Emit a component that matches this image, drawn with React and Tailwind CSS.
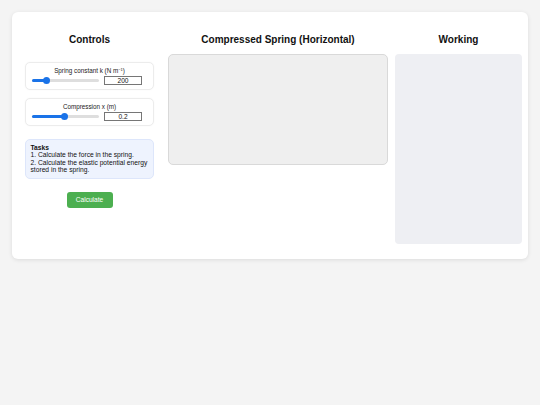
import React from "react";

function Slider({ pct }) {
  return (
    <div className="relative h-[9px] w-[67px] flex items-center">
      <div className="h-[3px] w-full rounded-full bg-[#dedede]" />
      <div
        className="absolute left-0 h-[3px] rounded-full bg-[#1a73e8]"
        style={{ width: `${pct}%` }}
      />
      <div
        className="absolute h-[7px] w-[7px] -ml-[3.5px] rounded-full bg-[#1a73e8]"
        style={{ left: `${pct}%` }}
      />
    </div>
  );
}

function Control({ label, value, pct }) {
  return (
    <div className="rounded-[5px] border border-[#ececec] bg-white pt-[4px] pb-[3.5px] pl-[6px] shadow-[0_0_2px_rgba(0,0,0,0.04)]">
      <div className="text-center text-[6.3px] leading-[7.5px] text-[#222] pr-[6px]">{label}</div>
      <div className="mt-[2px] flex items-center gap-[5px]">
        <Slider pct={pct} />
        <div className="h-[9px] w-[38px] border border-[#767676] text-center text-[6.6px] leading-[7px] text-[#111]">
          {value}
        </div>
      </div>
    </div>
  );
}

export default function App() {
  return (
    <div
      className="min-h-screen bg-[#f4f4f4] p-3"
      style={{ fontFamily: '"Liberation Sans", Arial, sans-serif' }}
    >
      <div className="flex h-[247px] rounded-[6px] bg-white pl-[13px] pr-[6px] pt-[21.5px] shadow-[0_1px_4px_rgba(0,0,0,0.1)]">
        {/* Controls */}
        <div className="w-[129px] shrink-0">
          <h2 className="text-center text-[10px] font-bold leading-[12px] text-[#111]">Controls</h2>
          <div className="mt-[16px] flex flex-col gap-[8px]">
            <Control
              label={<>Spring constant k (N m<sup className="text-[4px]">−1</sup>)</>}
              value="200"
              pct={22}
            />
            <Control label="Compression x (m)" value="0.2" pct={49} />
          </div>
          <div className="mt-[13.5px] rounded-[5px] border border-[#dde6fb] bg-[#eef3fe] px-[4.5px] pt-[3.5px] pb-[4.5px] text-[6.7px] leading-[7.6px] text-[#111]">
            <div className="font-bold">Tasks</div>
            <div>1. Calculate the force in the spring.</div>
            <div>2. Calculate the elastic potential energy stored in the spring.</div>
          </div>
          <div className="mt-[13px] flex justify-center">
            <button className="h-[16px] w-[46px] rounded-[3px] bg-[#4caf50] text-[6.6px] text-white">
              Calculate
            </button>
          </div>
        </div>

        {/* Spring */}
        <div className="ml-[14px] w-[220px] shrink-0">
          <h2 className="text-center text-[10px] font-bold leading-[12px] text-[#111]">
            Compressed Spring (Horizontal)
          </h2>
          <div className="mt-[8.5px] h-[111px] rounded-[5px] border border-[#d9d9d9] bg-[#efefef]" />
        </div>

        {/* Working */}
        <div className="ml-[7px] w-[127px] shrink-0">
          <h2 className="text-center text-[10px] font-bold leading-[12px] text-[#111]">Working</h2>
          <div className="mt-[8.5px] h-[190px] rounded-[4px] bg-[#eeeff3]" />
        </div>
      </div>
    </div>
  );
}
